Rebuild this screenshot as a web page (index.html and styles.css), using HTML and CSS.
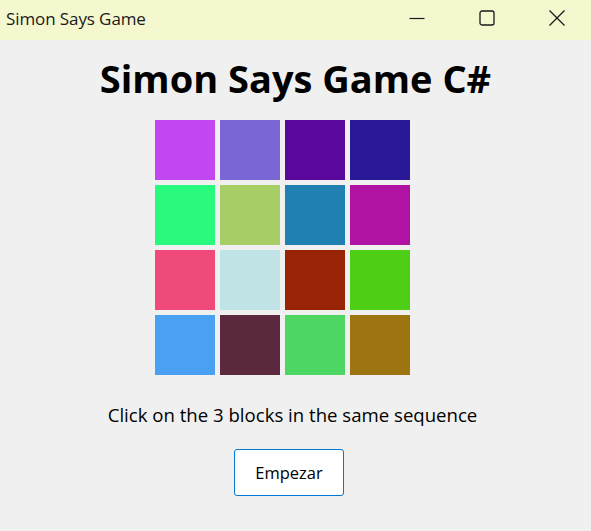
FILE: index.html
```html
<!DOCTYPE html>
<html>
<head>
<meta charset="utf-8">
<link rel="stylesheet" href="styles.css">
</head>
<body>
<div class="titlebar">
  <span class="wtitle">Simon Says Game</span>
  <div class="controls">
    <span class="ctl"><svg width="18" height="18" viewBox="0 0 18 18"><path d="M1.5 9.5h15" stroke="#1a1a1a" stroke-width="1.2"/></svg></span>
    <span class="ctl"><svg width="18" height="18" viewBox="0 0 18 18"><rect x="2" y="2" width="14" height="14" rx="2" fill="none" stroke="#1a1a1a" stroke-width="1.3"/></svg></span>
    <span class="ctl"><svg width="18" height="18" viewBox="0 0 18 18"><path d="M1.5 1.5l15 15M16.5 1.5l-15 15" stroke="#1a1a1a" stroke-width="1.3"/></svg></span>
  </div>
</div>
<main class="content">
  <h1 class="heading">Simon Says Game C#</h1>
  <div class="grid">
    <div class="cell" style="background:#c247f0"></div>
    <div class="cell" style="background:#7b66d6"></div>
    <div class="cell" style="background:#5a079b"></div>
    <div class="cell" style="background:#2a1996"></div>
    <div class="cell" style="background:#29f97c"></div>
    <div class="cell" style="background:#a7cd66"></div>
    <div class="cell" style="background:#2080b2"></div>
    <div class="cell" style="background:#b013a3"></div>
    <div class="cell" style="background:#ef4a7a"></div>
    <div class="cell" style="background:#c0e4e6"></div>
    <div class="cell" style="background:#992405"></div>
    <div class="cell" style="background:#4ecf15"></div>
    <div class="cell" style="background:#4aa0f2"></div>
    <div class="cell" style="background:#5c283e"></div>
    <div class="cell" style="background:#4ed662"></div>
    <div class="cell" style="background:#9e7410"></div>
  </div>
  <p class="hint">Click on the 3 blocks in the same sequence</p>
  <button class="start">Empezar</button>
</main>
</body>
</html>
```
FILE: styles.css
```css
html, body {
  margin: 0;
  padding: 0;
  background: #f0f0f0;
  width: 591px;
  height: 531px;
  overflow: hidden;
  font-family: "Open Sans", "Noto Sans", sans-serif;
  color: #000;
}
.titlebar {
  height: 40px;
  background: #f5f7cf;
  display: flex;
  align-items: center;
  justify-content: space-between;
}
.wtitle {
  padding-left: 6px;
  font-size: 17px;
  letter-spacing: -0.1px;
  color: #1a1a1a;
  margin-top: -4px;
}
.controls {
  display: flex;
  align-self: stretch;
  margin-right: -1px;
}
.ctl {
  width: 70px;
  display: flex;
  align-items: center;
  justify-content: center;
  margin-top: -4px;
}
.content {
  display: flex;
  flex-direction: column;
  align-items: center;
}
.heading {
  margin: 13px 0 0 0;
  font-size: 38px;
  font-weight: 700;
  line-height: 50px;
  height: 67px;
}
.grid {
  display: grid;
  grid-template-columns: repeat(4, 60px);
  grid-auto-rows: 60px;
  gap: 5px;
  margin-right: 26px;
}
.hint {
  margin: 28px 0 0 0;
  font-size: 18.6px;
  line-height: 24px;
  margin-right: 6px;
}
.start {
  margin-top: 22px;
  width: 110px;
  height: 47px;
  background: #fff;
  border: 1px solid #0078d4;
  border-radius: 3px;
  font-family: inherit;
  font-size: 16.5px;
  color: #000;
  margin-right: 13px;
}
```
